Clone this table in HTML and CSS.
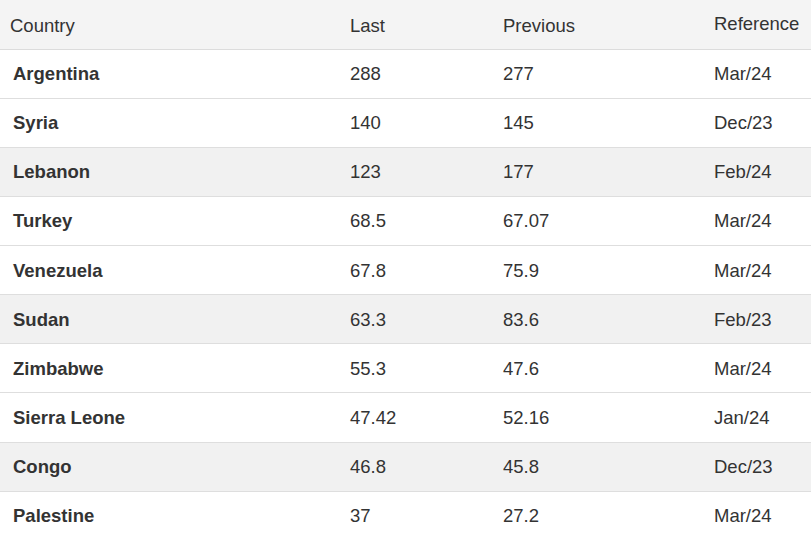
FILE: index.html
```html
<!DOCTYPE html>
<html>
<head>
<meta charset="utf-8">
<link rel="stylesheet" href="styles.css">
</head>
<body>
<table class="data">
  <colgroup>
    <col class="c1"><col class="c2"><col class="c3"><col class="c4">
  </colgroup>
  <thead>
    <tr><th>Country</th><th>Last</th><th>Previous</th><th class="ref">Reference</th></tr>
  </thead>
  <tbody>
    <tr><td class="name">Argentina</td><td>288</td><td>277</td><td>Mar/24</td></tr>
    <tr><td class="name">Syria</td><td>140</td><td>145</td><td>Dec/23</td></tr>
    <tr><td class="name">Lebanon</td><td>123</td><td>177</td><td>Feb/24</td></tr>
    <tr><td class="name">Turkey</td><td>68.5</td><td>67.07</td><td>Mar/24</td></tr>
    <tr><td class="name">Venezuela</td><td>67.8</td><td>75.9</td><td>Mar/24</td></tr>
    <tr><td class="name">Sudan</td><td>63.3</td><td>83.6</td><td>Feb/23</td></tr>
    <tr><td class="name">Zimbabwe</td><td>55.3</td><td>47.6</td><td>Mar/24</td></tr>
    <tr><td class="name">Sierra Leone</td><td>47.42</td><td>52.16</td><td>Jan/24</td></tr>
    <tr><td class="name">Congo</td><td>46.8</td><td>45.8</td><td>Dec/23</td></tr>
    <tr><td class="name">Palestine</td><td>37</td><td>27.2</td><td>Mar/24</td></tr>
  </tbody>
</table>
</body>
</html>
```
FILE: styles.css
```css
html, body {
  margin: 0;
  padding: 0;
  background: #fff;
}
.data {
  width: 811px;
  border-collapse: collapse;
  table-layout: fixed;
  font-family: "Liberation Sans", Arial, sans-serif;
  font-size: 18.5px;
  color: #333;
}
.c1 { width: 340px; }
.c2 { width: 153px; }
.c3 { width: 211px; }
.c4 { width: 107px; }
.data th,
.data td {
  height: 49.15px;
  padding: 1px 0 0 10px;
  box-sizing: border-box;
  text-align: left;
  vertical-align: middle;
  border-bottom: 1px solid #dedede;
  white-space: nowrap;
  line-height: 20px;
}
.data th {
  height: 49px;
  padding-top: 4px;
  font-weight: normal;
  background: #f4f4f4;
  border-bottom: 1px solid #dcdcdc;
}
.data th.ref {
  padding-top: 0;
}
.data td.name {
  font-weight: bold;
  padding-left: 13px;
}
.data tbody tr:nth-child(3n) td {
  background: #f1f1f1;
}
```
